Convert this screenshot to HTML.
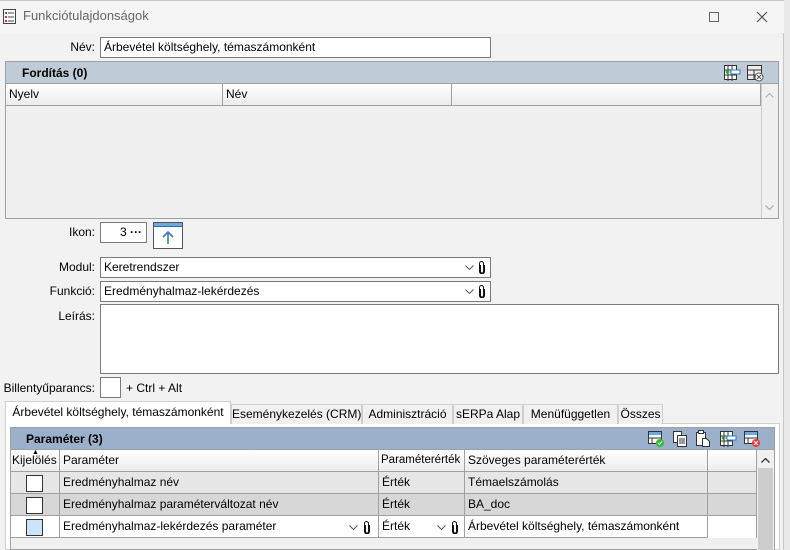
<!DOCTYPE html>
<html><head><meta charset="utf-8"><style>
*{box-sizing:border-box;margin:0;padding:0}
body{width:790px;height:550px;overflow:hidden;background:#e8e8e8;font-family:"Liberation Sans",sans-serif;font-size:12px;color:#000;position:relative}
.a{position:absolute;white-space:nowrap}
.win{left:0;top:0;width:784px;height:550px;background:#f2f2f2;border-right:1px solid #c8c8c8;border-top:1px solid #c8c8c8}
.inp{position:absolute;background:#fff;border:1px solid #7a7a7a;padding-left:3px;line-height:18px;font-size:12px;white-space:nowrap}
.lbl{position:absolute;text-align:right;width:95px;left:0;font-size:12px;white-space:nowrap}
.hdr{position:absolute;border-right:1px solid #a0a0a0;border-bottom:1px solid #a0a0a0;background:linear-gradient(#fff,#ececec);padding-left:3px;line-height:20px;font-size:12px;white-space:nowrap;overflow:hidden}
.cell{position:absolute;border-right:1px solid #a0a0a0;border-bottom:1px solid #a0a0a0;padding-left:3px;line-height:21px;font-size:12px;white-space:nowrap}
.tab{position:absolute;top:404px;height:20px;border:1px solid #d0d0d0;border-bottom:none;background:#f0f0f0;text-align:center;line-height:18px;font-size:12px;white-space:nowrap}
.cb{position:absolute;width:17px;height:17px;border:1px solid #333;background:#fff}
.dd{position:absolute}
</style></head><body>
<svg width="0" height="0" style="position:absolute"><defs>
<symbol id="clip" viewBox="0 0 8 13"><path d="M2.5 4V10.5A1.5 1.5 0 0 0 5.5 10.5V2.5A2 2 0 0 0 1.5 2.5V10.5A2.5 2.5 0 0 0 6.5 10.5V4" stroke="#111" fill="none" stroke-width="1"/></symbol>
<symbol id="chev" viewBox="0 0 9 5"><path d="M0.5 0.5L4.5 4.5L8.5 0.5" stroke="#555" fill="none"/></symbol>
</defs></svg>
<div class="a win"></div>
<div class="a" style="left:0;top:1px;width:784px;height:32px;background:#f5f5f5"></div>
<svg class="a" style="left:3px;top:9px" width="13" height="15" viewBox="0 0 13 15"><rect x="0.5" y="0.5" width="12" height="14" fill="#fff" stroke="#444"/><g fill="#d33"><rect x="2" y="3" width="2" height="2"/><rect x="2" y="7" width="2" height="2"/><rect x="2" y="11" width="2" height="2"/></g><g stroke="#444"><line x1="5" y1="4" x2="11" y2="4"/><line x1="5" y1="8" x2="11" y2="8"/><line x1="5" y1="12" x2="11" y2="12"/></g></svg>
<div class="a" style="left:23px;top:8px;font-size:13px;color:#666">Funkciótulajdonságok</div>
<div class="a" style="left:709px;top:12px;width:10px;height:10px;border:1px solid #666"></div>
<svg class="a" style="left:756px;top:11px" width="12" height="12"><path d="M1 1L11 11M11 1L1 11" stroke="#555" stroke-width="1.2"/></svg>

<div class="lbl" style="top:40px">Név:</div>
<div class="inp" style="left:100px;top:37px;width:391px;height:21px">Árbevétel költséghely, témaszámonként</div>

<div class="a" style="left:5px;top:61px;width:774px;height:158px;border:1px solid #a0a0a0;background:#f0f0f0"></div>
<div class="a" style="left:6px;top:62px;width:772px;height:22px;background:#bfcbd6;border-bottom:1px solid #a0a0a0"></div>
<div class="a" style="left:22px;top:66px;font-weight:bold;font-size:12px">Fordítás (0)</div>
<svg class="a" style="left:723px;top:64px" width="18" height="18"><rect x="1.5" y="1.5" width="12" height="14" fill="#fff" stroke="#333"/><path d="M1 6H14M1 11H14M5 1V17M9 1V17" stroke="#333"/><rect x="8" y="6" width="9" height="4" fill="#fff" stroke="#2a7bd0"/><path d="M3 8H8M5 6L3 8L5 10" stroke="#2a2" fill="none"/></svg>
<svg class="a" style="left:746px;top:64px" width="19" height="18"><rect x="1.5" y="1.5" width="14" height="14" fill="#eee" stroke="#333"/><path d="M1 6H16M1 11H16M8 6V16" stroke="#333"/><circle cx="13" cy="13" r="4" fill="#fff" stroke="#555"/><path d="M11 11L15 15M15 11L11 15" stroke="#555"/></svg>
<div class="hdr" style="left:6px;top:84px;width:217px;height:22px">Nyelv</div>
<div class="hdr" style="left:223px;top:84px;width:229px;height:22px">Név</div>
<div class="hdr" style="left:452px;top:84px;width:309px;height:22px;padding:0"></div>
<div class="a" style="left:761px;top:84px;width:17px;height:134px;background:#f0f0f0;border-left:1px solid #ccc"></div>
<svg class="a" style="left:765px;top:93px" width="9" height="5"><path d="M0.5 4.5L4.5 0.5L8.5 4.5" stroke="#aaa" fill="none"/></svg>
<svg class="a" style="left:765px;top:205px" width="9" height="5"><use href="#chev" style="opacity:.5"/></svg>

<div class="lbl" style="top:225px">Ikon:</div>
<div class="inp" style="left:100px;top:222px;width:47px;height:21px;text-align:right;padding-right:4px">3 <b>···</b></div>
<div class="a" style="left:153px;top:222px;width:30px;height:27px;border:1px solid #555;background:#fff"></div>
<div class="a" style="left:154px;top:223px;width:28px;height:4px;background:#6fa8dc;border-bottom:1px solid #2a70b8"></div>
<svg class="a" style="left:160px;top:230px" width="16" height="14"><path d="M8 14V2M3 7L8 2L13 7" stroke="#3a7cc0" stroke-width="1.6" fill="none"/></svg>

<div class="lbl" style="top:260px">Modul:</div>
<div class="inp" style="left:100px;top:257px;width:391px;height:21px">Keretrendszer</div>
<svg class="dd" style="left:465px;top:265px" width="9" height="5"><use href="#chev"/></svg><svg class="dd" style="left:478px;top:261px" width="8" height="13"><use href="#clip"/></svg>
<div class="lbl" style="top:284px">Funkció:</div>
<div class="inp" style="left:100px;top:281px;width:391px;height:21px">Eredményhalmaz-lekérdezés</div>
<svg class="dd" style="left:465px;top:289px" width="9" height="5"><use href="#chev"/></svg><svg class="dd" style="left:478px;top:285px" width="8" height="13"><use href="#clip"/></svg>
<div class="lbl" style="top:309px">Leírás:</div>
<div class="inp" style="left:100px;top:304px;width:679px;height:70px"></div>
<div class="lbl" style="top:381px">Billentyűparancs:</div>
<div class="inp" style="left:100px;top:377px;width:21px;height:21px"></div>
<div class="a" style="left:126px;top:381px">+ Ctrl + Alt</div>

<div class="a" style="left:5px;top:423px;width:775px;height:127px;border:1px solid #d0d0d0;background:#fff"></div>
<div class="tab" style="left:5px;top:401px;height:23px;width:226px;background:#fff;line-height:21px">Árbevétel költséghely, témaszámonként</div>
<div class="tab" style="left:231px;width:131px">Eseménykezelés (CRM)</div>
<div class="tab" style="left:362px;width:91px">Adminisztráció</div>
<div class="tab" style="left:453px;width:70px">sERPa Alap</div>
<div class="tab" style="left:523px;width:95px">Menüfüggetlen</div>
<div class="tab" style="left:618px;width:45px">Összes</div>

<div class="a" style="left:10px;top:427px;width:765px;height:123px;border:1px solid #a0a0a0;background:#f0f0f0"></div>
<div class="a" style="left:11px;top:428px;width:763px;height:22px;background:#9ab0cb;border-bottom:1px solid #a0a0a0"></div>
<div class="a" style="left:26px;top:432px;font-weight:bold">Paraméter (3)</div>
<svg class="a" style="left:647px;top:430px" width="18" height="18"><rect x="1.5" y="1.5" width="13" height="12" fill="#fff" stroke="#333"/><rect x="2" y="2" width="12" height="3" fill="#6fa8dc"/><path d="M1 8H14M5 8V14" stroke="#333"/><circle cx="13" cy="13" r="4" fill="#3b3"/><path d="M11 13L12.5 14.5L15 11.5" stroke="#fff" fill="none"/></svg>
<svg class="a" style="left:672px;top:430px" width="16" height="18"><rect x="1.5" y="1.5" width="8" height="11" fill="#fff" stroke="#333"/><rect x="5.5" y="5.5" width="9" height="11" fill="#fff" stroke="#333"/><path d="M7 9H13M7 11H13M7 13H13" stroke="#333"/></svg>
<svg class="a" style="left:695px;top:429px" width="16" height="19"><rect x="1.5" y="3.5" width="9" height="13" fill="#fff" stroke="#333"/><rect x="3.5" y="1.5" width="5" height="3" fill="#fff" stroke="#333"/><path d="M7.5 9.5H11.5L14.5 12.5V17.5H7.5Z" fill="#fff" stroke="#333"/></svg>
<svg class="a" style="left:719px;top:430px" width="18" height="18"><rect x="1.5" y="1.5" width="12" height="14" fill="#fff" stroke="#333"/><path d="M1 6H14M1 11H14M5 1V17M9 1V17" stroke="#333"/><rect x="8" y="6" width="9" height="4" fill="#fff" stroke="#2a7bd0"/><path d="M3 8H8M5 6L3 8L5 10" stroke="#2a2" fill="none"/></svg>
<svg class="a" style="left:743px;top:430px" width="18" height="18"><rect x="1.5" y="1.5" width="13" height="12" fill="#fff" stroke="#333"/><rect x="2" y="2" width="12" height="3" fill="#6fa8dc"/><path d="M1 8H14M5 8V14" stroke="#333"/><circle cx="13" cy="13" r="4" fill="#e33"/><path d="M11 11L15 15M15 11L11 15" stroke="#fff"/></svg>

<div class="hdr" style="left:11px;top:450px;width:49px;height:22px;padding-left:1px">Kijelölés</div>
<div class="a" style="left:32px;top:449px;font-size:7px">▲</div>
<div class="hdr" style="left:60px;top:450px;width:319px;height:22px">Paraméter</div>
<div class="hdr" style="left:379px;top:450px;width:86px;height:22px;padding-left:2px;font-size:11.5px">Paraméterérték</div>
<div class="hdr" style="left:465px;top:450px;width:243px;height:22px">Szöveges paraméterérték</div>
<div class="hdr" style="left:708px;top:450px;width:49px;height:22px"></div>

<div class="a" style="left:11px;top:472px;width:746px;height:22px;background:#e6e6e6"></div>
<div class="a" style="left:11px;top:494px;width:746px;height:22px;background:#d7d7d7"></div>
<div class="a" style="left:11px;top:516px;width:746px;height:22px;background:#fff"></div>
<div class="cell" style="left:11px;top:472px;width:49px;height:22px"></div>
<div class="cell" style="left:60px;top:472px;width:319px;height:22px">Eredményhalmaz név</div>
<div class="cell" style="left:379px;top:472px;width:86px;height:22px">Érték</div>
<div class="cell" style="left:465px;top:472px;width:243px;height:22px">Témaelszámolás</div>
<div class="cell" style="left:708px;top:472px;width:49px;height:22px"></div>
<div class="cell" style="left:11px;top:494px;width:49px;height:22px"></div>
<div class="cell" style="left:60px;top:494px;width:319px;height:22px">Eredményhalmaz paraméterváltozat név</div>
<div class="cell" style="left:379px;top:494px;width:86px;height:22px">Érték</div>
<div class="cell" style="left:465px;top:494px;width:243px;height:22px">BA_doc</div>
<div class="cell" style="left:708px;top:494px;width:49px;height:22px"></div>
<div class="cell" style="left:11px;top:516px;width:49px;height:22px"></div>
<div class="cell" style="left:60px;top:516px;width:319px;height:22px">Eredményhalmaz-lekérdezés paraméter</div>
<div class="cell" style="left:379px;top:516px;width:86px;height:22px">Érték</div>
<div class="cell" style="left:465px;top:516px;width:243px;height:22px">Árbevétel költséghely, témaszámonként</div>
<div class="cell" style="left:708px;top:516px;width:49px;height:22px;border-bottom:none"></div>
<div class="cb" style="left:26px;top:475px"></div>
<div class="cb" style="left:26px;top:497px"></div>
<div class="cb" style="left:26px;top:519px;background:#cce4f7"></div>
<svg class="dd" style="left:349px;top:525px" width="9" height="5"><use href="#chev"/></svg><svg class="dd" style="left:363px;top:521px" width="8" height="13"><use href="#clip"/></svg>
<svg class="dd" style="left:437px;top:525px" width="9" height="5"><use href="#chev"/></svg><svg class="dd" style="left:451px;top:521px" width="8" height="13"><use href="#clip"/></svg>
<div class="a" style="left:757px;top:450px;width:17px;height:100px;background:#f0f0f0"></div>
<div class="a" style="left:758px;top:468px;width:15px;height:82px;background:#cdcdcd"></div>
<svg class="a" style="left:761px;top:458px" width="9" height="5"><path d="M0.5 4.5L4.5 0.5L8.5 4.5" stroke="#333" fill="none" stroke-width="1.3"/></svg>
</body></html>
